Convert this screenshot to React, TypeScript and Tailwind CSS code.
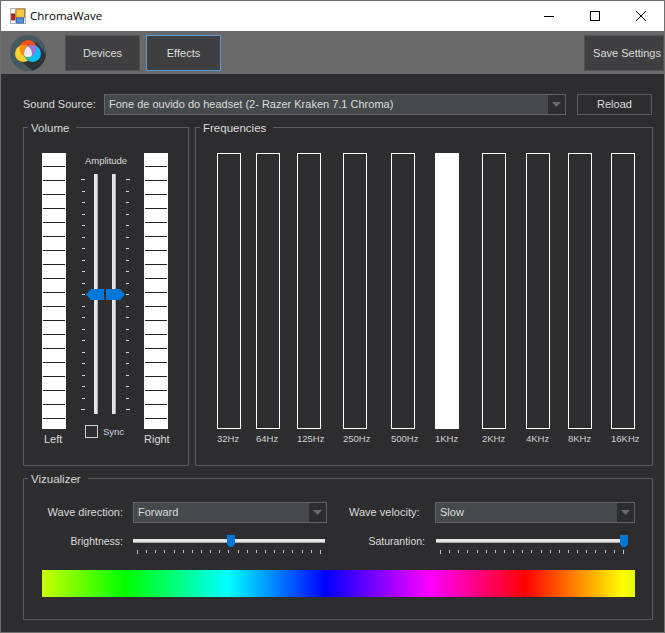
const levels = Array.from({ length: 19 }, (_, i) => i)
const ticks = Array.from({ length: 21 }, (_, i) => i)

const frequencies = [
  { label: '32Hz', margin: 'ml-[21px]' },
  { label: '64Hz', margin: 'ml-[15px]' },
  { label: '125Hz', margin: 'ml-[17px]' },
  { label: '250Hz', margin: 'ml-[22px]' },
  { label: '500Hz', margin: 'ml-[24px]' },
  { label: '1KHz', margin: 'ml-[20px]', active: true },
  { label: '2KHz', margin: 'ml-[23px]' },
  { label: '4KHz', margin: 'ml-[20px]' },
  { label: '8KHz', margin: 'ml-[18px]' },
  { label: '16KHz', margin: 'ml-[19px]' },
]

function AppIcon() {
  return (
    <svg width="16" height="16" viewBox="0 0 16 16" className="shrink-0">
      <rect x="0.5" y="0.5" width="15" height="15" fill="#f4f4f4" stroke="#b5b5b5" />
      <path d="M5.5 1v14M1 5.5h4M1 11.5h14" stroke="#c4c4c4" />
      <rect x="1.5" y="6" width="3.5" height="6" fill="#c8201c" stroke="#7c1512" strokeWidth="0.6" />
      <rect x="6" y="1" width="8.5" height="8.5" fill="#f8c83c" stroke="#a9853a" />
      <rect x="6.5" y="10" width="7" height="5" fill="#4f8fe0" stroke="#3a6cb0" />
    </svg>
  )
}

function Logo() {
  return (
    <svg width="36" height="36" viewBox="0 0 36 36" className="shrink-0">
      <defs>
        <clipPath id="disc"><circle cx="18" cy="18" r="18" /></clipPath>
        <clipPath id="top"><circle cx="18" cy="13.5" r="8.5" /></clipPath>
        <clipPath id="left"><circle cx="13.5" cy="18.5" r="8.5" /></clipPath>
        <clipPath id="right"><circle cx="22.5" cy="18.5" r="8.5" /></clipPath>
      </defs>
      <circle cx="18" cy="18" r="18" fill="#455a5f" />
      <path d="M14 5 L27 8 L40 24 L28 40 L8 24 Z" fill="#2b3538" clipPath="url(#disc)" />
      <circle cx="18" cy="13.5" r="8.5" fill="#f4511e" />
      <circle cx="13.5" cy="18.5" r="8.5" fill="#fdd12e" />
      <circle cx="22.5" cy="18.5" r="8.5" fill="#06bdf5" />
      <g clipPath="url(#top)">
        <circle cx="13.5" cy="18.5" r="8.5" fill="#f98a1a" />
        <circle cx="22.5" cy="18.5" r="8.5" fill="#a070d8" />
      </g>
      <g clipPath="url(#left)">
        <circle cx="22.5" cy="18.5" r="8.5" fill="#3fb58a" />
        <g clipPath="url(#right)">
          <circle cx="18" cy="13.5" r="8.5" fill="#eceaf2" />
        </g>
      </g>
    </svg>
  )
}

function ToolButton({ label, active, className }: { label: string; active?: boolean; className: string }) {
  return (
    <button
      className={`h-[36px] bg-[#3f3f41] border text-[11px] text-[#dcdcdc] ${
        active ? 'border-[#5b9bd1]' : 'border-[#525254]'
      } ${className}`}
    >
      {label}
    </button>
  )
}

function ComboBox({ value, className }: { value: string; className: string }) {
  return (
    <div className={`h-[21px] flex bg-[#46494b] border border-[#646464] text-[11px] text-[#dcdcdc] ${className}`}>
      <span className="flex-1 pl-[4px] leading-[18px] whitespace-nowrap">{value}</span>
      <span className="w-[17px] bg-[#2d2d30] flex items-center justify-center">
        <svg width="9" height="5" viewBox="0 0 9 5">
          <path d="M0 0h9L4.5 5z" fill="#6b6b6b" />
        </svg>
      </span>
    </div>
  )
}

function GroupBox({ title, className, children }: { title: string; className: string; children: React.ReactNode }) {
  return (
    <div className={`relative border border-[#5a5a5a] ${className}`}>
      <span className="absolute -top-[8px] left-[4px] bg-[#2d2d30] pl-[3px] pr-[7px] text-[11.5px] leading-[16px] text-[#dcdcdc]">
        {title}
      </span>
      {children}
    </div>
  )
}

function LevelMeter() {
  return (
    <div className="w-[24px] h-[276px] bg-white px-[1px]">
      {levels.map((level) => (
        <div key={level} className="h-[14px] border-b border-[#222222]" />
      ))}
    </div>
  )
}

function TickColumn({ side }: { side: 'left' | 'right' }) {
  return (
    <div className={`h-[231px] mt-[5px] flex flex-col justify-between w-[4px] ${side === 'left' ? 'items-end' : 'items-start'}`}>
      {ticks.map((tick) => (
        <div
          key={tick}
          className={`h-[1px] bg-[#d8d8d8] ${tick === 0 || tick === 20 ? 'w-[4px]' : 'w-[3px]'}`}
        />
      ))}
    </div>
  )
}

function VerticalTrack() {
  return <div className="w-[4px] h-[240px] bg-[#e4e6e7] border-r border-[#a8a8a8]" />
}

function Slider({ thumb }: { thumb: string }) {
  return (
    <div className="relative w-[192px] h-[18px] pt-[4px]">
      <div className="h-[4px] bg-[#e6e6e6] border-b border-[#a6a6a6]" />
      <svg width="8" height="12" viewBox="0 0 8 12" className={`absolute top-0 ${thumb}`}>
        <path d="M0 0h8v9l-2.5 3h-3L0 9z" fill="#0078d7" />
      </svg>
      <div className="mt-[7px] mx-[4px] flex justify-between items-start">
        {ticks.map((tick) => (
          <div
            key={tick}
            className={`w-[1px] bg-[#c8c8c8] ${tick === 0 || tick === 20 ? 'h-[4px]' : 'h-[3px]'}`}
          />
        ))}
      </div>
    </div>
  )
}

export default function App() {
  return (
    <div className="w-[665px] h-[633px] border border-[#6e6e6e] bg-[#2d2d30] overflow-hidden font-['Liberation_Sans',Arial,sans-serif]">
      <div className="h-[30px] bg-white flex items-center pl-[9px]">
        <AppIcon />
        <span className="ml-[4px] text-[11.5px] text-black font-['Open_Sans',sans-serif]">ChromaWave</span>
        <div className="ml-auto flex">
          <div className="w-[46px] h-[30px] flex items-center justify-center">
            <svg width="10" height="10" viewBox="0 0 10 10"><path d="M0 5.5h10" stroke="#000" /></svg>
          </div>
          <div className="w-[46px] h-[30px] flex items-center justify-center">
            <svg width="10" height="10" viewBox="0 0 10 10"><rect x="0.5" y="0.5" width="9" height="9" fill="none" stroke="#000" /></svg>
          </div>
          <div className="w-[46px] h-[30px] flex items-center justify-center">
            <svg width="10" height="10" viewBox="0 0 10 10"><path d="M0 0l10 10M10 0L0 10" stroke="#000" strokeWidth="1" /></svg>
          </div>
        </div>
      </div>

      <div className="h-[43px] bg-[#696969] flex items-start pt-[4px] pl-[9px]">
        <Logo />
        <ToolButton label="Devices" className="ml-[19px] w-[75px]" />
        <ToolButton label="Effects" active className="ml-[6px] w-[75px]" />
        <ToolButton label="Save Settings" className="ml-auto w-[80px] pl-[6px] whitespace-nowrap" />
      </div>

      <div className="pl-[22px] pt-[20px]">
        <div className="flex items-center">
          <span className="w-[81px] text-[11px] text-[#dcdcdc]">Sound Source:</span>
          <ComboBox value="Fone de ouvido do headset (2- Razer Kraken 7.1 Chroma)" className="w-[462px]" />
          <button className="ml-[11px] w-[75px] h-[21px] border border-[#5a5a5a] text-[11px] text-[#dcdcdc]">Reload</button>
        </div>

        <div className="mt-[12px] flex">
          <GroupBox title="Volume" className="w-[166px] h-[339px] pl-[18px] pt-[25px]">
            <div className="flex">
              <div className="flex flex-col">
                <LevelMeter />
                <span className="mt-[3px] ml-[2px] text-[11px] leading-[14px] text-[#dcdcdc]">Left</span>
              </div>
              <div className="w-[78px] flex flex-col">
                <span className="text-center pl-[2px] pt-[2px] text-[9.5px] leading-[12px] text-[#dcdcdc]">Amplitude</span>
                <div className="relative mt-[7px] flex pl-[15px]">
                  <TickColumn side="left" />
                  <div className="ml-[9px]"><VerticalTrack /></div>
                  <div className="ml-[14px]"><VerticalTrack /></div>
                  <div className="ml-[10px]"><TickColumn side="right" /></div>
                  <svg width="18" height="11" viewBox="0 0 18 11" className="absolute left-[20px] top-[115px]">
                    <path d="M0 5.5L5 0h13v11H5z" fill="#0078d7" />
                  </svg>
                  <svg width="19" height="11" viewBox="0 0 19 11" className="absolute left-[40px] top-[115px]">
                    <path d="M19 5.5L14 11H0V0h14z" fill="#0078d7" />
                  </svg>
                </div>
                <div className="mt-[11px] pl-[19px] flex items-center">
                  <div className="w-[13px] h-[13px] border border-[#cfcfcf]" />
                  <span className="ml-[5px] pt-[1px] text-[9.5px] leading-[12px] text-[#c8d4e0]">Sync</span>
                </div>
              </div>
              <div className="flex flex-col">
                <LevelMeter />
                <span className="mt-[3px] text-[11px] leading-[14px] text-[#dcdcdc]">Right</span>
              </div>
            </div>
          </GroupBox>

          <GroupBox title="Frequencies" className="ml-[6px] w-[458px] h-[339px] pt-[25px]">
            <div className="flex">
              {frequencies.map(({ label, margin, active }) => (
                <div key={label} className={`w-[24px] ${margin}`}>
                  <div className={`h-[276px] border border-white ${active ? 'bg-white' : ''}`} />
                  <div className="mt-[4px] text-[9.5px] leading-[12px] text-[#d0d0d0] whitespace-nowrap">{label}</div>
                </div>
              ))}
            </div>
          </GroupBox>
        </div>

        <GroupBox title="Vizualizer" className="mt-[12px] w-[630px] h-[142px] pt-[23px]">
          <div className="flex items-center text-[11px] text-[#dcdcdc]">
            <span className="w-[99px] text-right">Wave direction:</span>
            <ComboBox value="Forward" className="ml-[10px] w-[194px]" />
            <span className="ml-[22px] w-[72px] whitespace-nowrap">Wave velocity:</span>
            <ComboBox value="Slow" className="ml-[14px] w-[200px]" />
          </div>
          <div className="mt-[12px] flex text-[10.5px] leading-[12px] text-[#dcdcdc]">
            <span className="w-[99px] text-right">Brightness:</span>
            <div className="ml-[10px]"><Slider thumb="left-[94px]" /></div>
            <span className="w-[100px] text-right">Saturantion:</span>
            <div className="ml-[11px]"><Slider thumb="left-[184px]" /></div>
          </div>
          <div className="mt-[17px] ml-[18px] w-[593px] h-[27px] bg-[linear-gradient(90deg,#c8ff00_0%,#00ff00_14%,#00ffff_31.4%,#0000ff_47.8%,#ff00ff_65.5%,#ff0000_81.5%,#ffff00_98%,#e0ff00_100%)]" />
        </GroupBox>
      </div>
    </div>
  )
}
